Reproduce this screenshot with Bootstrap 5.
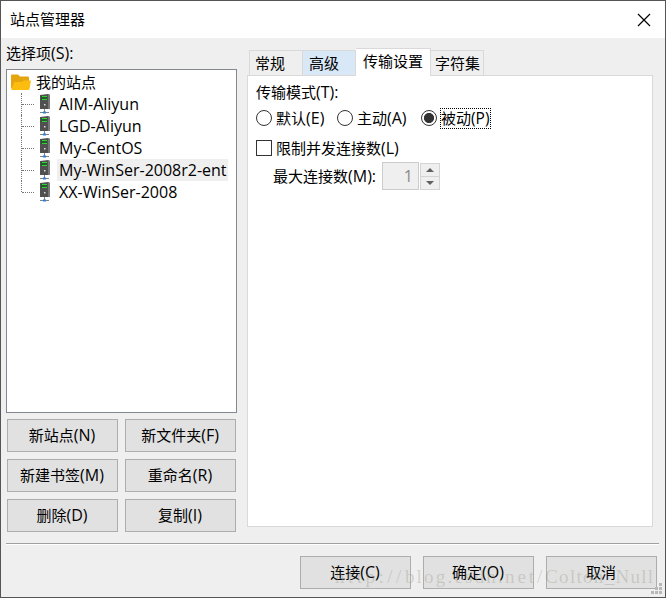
<!DOCTYPE html>
<html lang="zh-CN">
<head>
<meta charset="utf-8">
<meta name="viewport" content="width=device-width, initial-scale=1">
<title>站点管理器</title>
<link href="https://cdn.jsdelivr.net/npm/bootstrap@5.3.0/dist/css/bootstrap.min.css" rel="stylesheet">
<style>
body{font-family:"Open Sans","Noto Sans CJK SC",sans-serif;font-size:15px;line-height:22px;color:#000;background:#efefef;overflow:hidden}
.window{width:666px;height:598px;border:1px solid #555558;background:#efefef}
.titlebar{height:37px;padding:0 14px 0 9px;background:#fff}
.titlebar span{margin-top:-2px}
.close-btn{width:14px;height:14px;border:0;padding:0;background:none;line-height:0}
.key{font-size:16px;line-height:1}
.main-area{height:505px;padding:0 12px 0 5px}
.left-pane{width:231px;padding-top:4px}
.pane-label{height:22px}
.right-pane{width:406px;padding-top:10px}
.tree{height:344px;margin-top:5px;border:1px solid #828790;background:#fff;padding:1px 0 0 4px}
.tree-root{height:22px}
.tree-root svg{margin-right:5px}
.branches{padding-left:10px}
.tree-node{height:22px;position:relative;padding-left:13px}
.tree-node::before{content:"";position:absolute;left:0;top:0;height:22px;border-left:1px dotted #777}
.tree-node:last-child::before{height:11px}
.tree-node::after{content:"";position:absolute;left:1px;top:11px;width:12px;border-top:1px dotted #777}
.node-name{margin-left:5px;padding:0 1px 0 2px;font-size:16px}
.node-name.selected{background:#efefef}
.actions{display:grid;grid-template-columns:111px 111px;gap:7px;padding:6px 0 0 1px}
.dlg-btn{width:111px;height:33px;padding:0 1px 0 0;border:1px solid #adadad;border-radius:0;background:#e1e1e1;color:#000;font-size:15px;line-height:31px}
.dlg-btn:hover{background:#e5f1fb;color:#000;border-color:#0078d7}
.tabs{height:27px;padding-left:2px}
.tab-item{height:25px;padding:0 0 0 6px;border:1px solid #d9d9d9;border-left:0;border-bottom:0;line-height:25px;background:#efefef;width:53px}
.tab-item.first{border-left:1px solid #d9d9d9;width:54px;padding-left:5px}
.tab-item.hover{background:#d8e8f7}
.tab-item.active{width:75px;height:28px;background:#fff;margin-bottom:-1px;padding-left:7px;position:relative}
.tab-item.last{padding-left:4px}
.tab-panel{height:452px;border:1px solid #d9d9d9;background:#fff;padding:5px 0 0 8px}
.radio-row{height:22px;margin-top:4px}
.radio-dot{width:16px;height:16px;border:1px solid #333;border-radius:50%;background:#fff;margin-right:4px;flex:none}
.radio-dot.on{background:radial-gradient(circle,#333 0 4.7px,#fff 5.4px)}
.opt1{width:81px}.opt2{width:84px}
.focused{height:19px;line-height:19px;outline:1px dotted #000;width:49px;white-space:nowrap}
.focused .key{font-size:15.5px}
.box{width:16px;height:16px;border:1px solid #333;background:#fff;margin-right:4px}
.limit-row{padding-left:17px;margin-top:3px}
.limit-label{width:104px;white-space:nowrap}
.num{width:37px;height:28px;border:1px solid #ccc;background:#efefef;color:#8a8a8a;font-size:16px;text-align:right;padding-right:5px;line-height:26px;margin-left:5px}
.spin{width:20px;height:27px;margin-left:1px}
.spin span{height:14px;border:1px solid #d4d4d4;background:#efefef;display:flex;align-items:center;justify-content:center}
.spin span+span{margin-top:-1px}
.rule{height:2px;margin:0 6px 0 5px;background:#fff;border-top:1px solid #a0a0a0}
.footer-bar{height:52px;padding:11px 8px 0 0;gap:12px;position:relative}
.watermark{position:absolute;left:334px;top:21px;font:19px/22px "Liberation Serif",serif;color:rgba(150,150,135,.34);white-space:nowrap;pointer-events:none}
.w1{letter-spacing:3.5px}.w2{letter-spacing:2.2px}.w3{letter-spacing:2.9px}.w4{letter-spacing:1.3px}
.grip{position:absolute;right:2px;bottom:2px}
</style>
</head>
<body>
<svg width="0" height="0" class="position-absolute" aria-hidden="true">
<symbol id="server" viewBox="0 0 12 20">
<path d="M1 1l8-1 2 1v14H1z" fill="#505050"/><path d="M9 0l2 1v14H9z" fill="#777"/>
<path d="M2 2h6v4H2z" fill="#235a27"/><path d="M3 2.500h5M3 5.500h5" stroke="#2fd43a"/>
<path d="M5 10h1.500v1.500H5z" fill="#ddd"/><path d="M5.500 15v3M1 18.500h9" stroke="#7a8288"/><path d="M4 17.500h3v2H4z" fill="#2f7fd6"/>
</symbol>
</svg>
<div class="window">
<header class="titlebar d-flex align-items-center justify-content-between">
<span>站点管理器</span>
<button class="close-btn" aria-label="关闭"><svg width="14" height="14"><path d="M1 1l12 12M13 1L1 13" stroke="#000" stroke-width="1.2"/></svg></button>
</header>
<main class="main-area d-flex justify-content-between">
<section class="left-pane">
<div class="pane-label">选择项<span class="key">(S):</span></div>
<div class="tree">
<div class="tree-root d-flex align-items-center"><svg width="20" height="17"><path d="M0 1.500Q0 .5 1 .5h6l2 2h8q1 0 1 1V14H0z" fill="#e5a50e"/><path d="M3 9q.4-1 1.500-1H11l2-1.500h7L18.500 15q-.2 1-1.500 1H1q-1 0-.8-1z" fill="#fdbd10"/></svg><span>我的站点</span></div>
<div class="branches">
<div class="tree-node d-flex align-items-center"><svg width="14" height="20" class="ms-1"><use href="#server"/></svg><span class="node-name">AIM-Aliyun</span></div>
<div class="tree-node d-flex align-items-center"><svg width="14" height="20" class="ms-1"><use href="#server"/></svg><span class="node-name">LGD-Aliyun</span></div>
<div class="tree-node d-flex align-items-center"><svg width="14" height="20" class="ms-1"><use href="#server"/></svg><span class="node-name">My-CentOS</span></div>
<div class="tree-node d-flex align-items-center"><svg width="14" height="20" class="ms-1"><use href="#server"/></svg><span class="node-name selected">My-WinSer-2008r2-ent</span></div>
<div class="tree-node d-flex align-items-center"><svg width="14" height="20" class="ms-1"><use href="#server"/></svg><span class="node-name">XX-WinSer-2008</span></div>
</div>
</div>
<div class="actions">
<button class="btn dlg-btn">新站点<span class="key">(N)</span></button><button class="btn dlg-btn">新文件夹<span class="key">(F)</span></button>
<button class="btn dlg-btn">新建书签<span class="key">(M)</span></button><button class="btn dlg-btn">重命名<span class="key">(R)</span></button>
<button class="btn dlg-btn">删除<span class="key">(D)</span></button><button class="btn dlg-btn">复制<span class="key">(I)</span></button>
</div>
</section>
<section class="right-pane">
<div class="tabs d-flex align-items-end">
<div class="tab-item first">常规</div><div class="tab-item hover">高级</div><div class="tab-item active">传输设置</div><div class="tab-item last">字符集</div>
</div>
<div class="tab-panel">
<div class="pane-label">传输模式<span class="key">(T):</span></div>
<div class="radio-row d-flex align-items-center">
<div class="opt1 d-flex align-items-center"><span class="radio-dot"></span><span>默认<span class="key">(E)</span></span></div>
<div class="opt2 d-flex align-items-center"><span class="radio-dot"></span><span>主动<span class="key">(A)</span></span></div>
<div class="d-flex align-items-center"><span class="radio-dot on"></span><span class="focused">被动<span class="key">(P)</span></span></div>
</div>
<div class="d-flex align-items-center mt-2 pane-label"><span class="box"></span><span>限制并发连接数<span class="key">(L)</span></span></div>
<div class="limit-row d-flex align-items-center"><span class="limit-label">最大连接数<span class="key">(M):</span></span><div class="num">1</div>
<div class="spin"><span><svg width="8" height="4"><path d="M0 4l4-4 4 4z" fill="#606060"/></svg></span><span><svg width="8" height="4"><path d="M0 0l4 4 4-4z" fill="#606060"/></svg></span></div></div>
</div>
</section>
</main>
<div class="rule"></div>
<footer class="footer-bar d-flex justify-content-end">
<button class="btn dlg-btn">连接<span class="key">(C)</span></button><button class="btn dlg-btn">确定<span class="key">(O)</span></button><button class="btn dlg-btn">取消</button>
<div class="watermark"><span class="w1">http://</span><span class="w2">blog.csdn.</span><span class="w3">net/</span><span class="w4">Colton_Null</span></div>
<svg class="grip" width="12" height="12" fill="#b8b8b8"><path d="M8 0h3v3H8zM8 4h3v3H8zM4 4h3v3H4zM0 8h3v3H0zM4 8h3v3H4zM8 8h3v3H8z"/></svg>
</footer>
</div>
<script src="https://cdn.jsdelivr.net/npm/bootstrap@5.3.0/dist/js/bootstrap.bundle.min.js"></script>
</body>
</html>
